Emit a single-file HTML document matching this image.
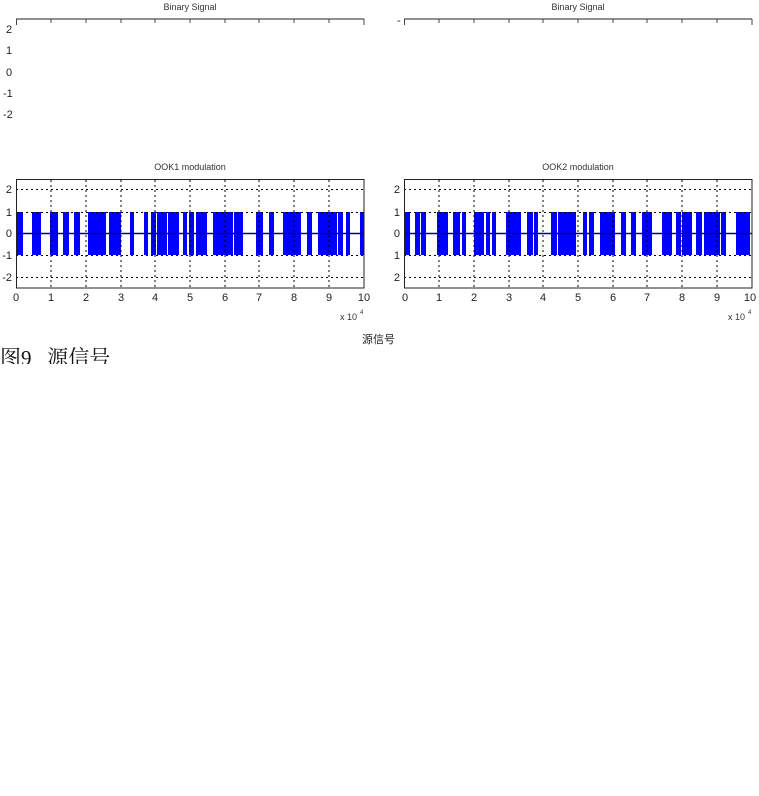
<!DOCTYPE html>
<html><head><meta charset="utf-8"><style>
html,body{margin:0;padding:0;background:#fff;width:759px;height:796px;overflow:hidden}
svg{position:absolute;left:0;top:0}
.t{font-family:"Liberation Sans",sans-serif;font-size:9px;fill:#333}
.n{font-family:"Liberation Sans",sans-serif;font-size:11px;fill:#222}
.cap{position:absolute;left:0;top:346px;height:18px;overflow:hidden;font-family:"Liberation Serif","Noto Serif CJK SC",serif;font-size:21px;line-height:24px;color:#111;white-space:pre}
</style></head><body>
<svg width="759" height="796" viewBox="0 0 759 796">
<!-- top left -->
<text class="t" x="190" y="10" text-anchor="middle">Binary Signal</text>
<line x1="16" y1="19" x2="364" y2="19" stroke="#222"/>
<g stroke="#444">
<line x1="16.5" y1="19" x2="16.5" y2="25"/><line x1="51" y1="19" x2="51" y2="23"/><line x1="86" y1="19" x2="86" y2="23"/><line x1="121" y1="19" x2="121" y2="23"/><line x1="155" y1="19" x2="155" y2="23"/><line x1="190" y1="19" x2="190" y2="23"/><line x1="225" y1="19" x2="225" y2="23"/><line x1="259" y1="19" x2="259" y2="23"/><line x1="294" y1="19" x2="294" y2="23"/><line x1="329" y1="19" x2="329" y2="23"/><line x1="364" y1="19" x2="364" y2="25"/>
</g>
<text class="n" x="6" y="33">2</text><text class="n" x="6" y="54">1</text><text class="n" x="6" y="76">0</text><text class="n" x="3" y="97">-1</text><text class="n" x="3" y="118">-2</text>
<!-- top right -->
<text class="t" x="578" y="10" text-anchor="middle">Binary Signal</text>
<line x1="404" y1="19" x2="752" y2="19" stroke="#222"/>
<g stroke="#444">
<line x1="404.5" y1="19" x2="404.5" y2="25"/><line x1="439" y1="19" x2="439" y2="23"/><line x1="474" y1="19" x2="474" y2="23"/><line x1="509" y1="19" x2="509" y2="23"/><line x1="543" y1="19" x2="543" y2="23"/><line x1="578" y1="19" x2="578" y2="23"/><line x1="613" y1="19" x2="613" y2="23"/><line x1="647" y1="19" x2="647" y2="23"/><line x1="682" y1="19" x2="682" y2="23"/><line x1="717" y1="19" x2="717" y2="23"/><line x1="752" y1="19" x2="752" y2="25"/>
</g>
<text class="n" x="397" y="24">-</text>

<!-- plot 1 -->
<text class="t" x="190" y="170" text-anchor="middle">OOK1 modulation</text>
<g fill="#0000ff">
<rect x="17" y="212" width="6" height="43"/><rect x="32" y="212" width="9" height="43"/><rect x="50" y="212" width="8" height="43"/><rect x="63" y="212" width="6" height="43"/><rect x="74" y="212" width="6" height="43"/><rect x="88" y="212" width="18" height="43"/><rect x="109" y="212" width="12" height="43"/><rect x="130" y="212" width="4" height="43"/><rect x="144" y="212" width="4" height="43"/><rect x="151" y="212" width="5" height="43"/><rect x="157" y="212" width="10" height="43"/><rect x="168" y="212" width="11" height="43"/><rect x="183" y="212" width="4" height="43"/><rect x="189" y="212" width="5" height="43"/><rect x="196" y="212" width="11" height="43"/><rect x="213" y="212" width="20" height="43"/><rect x="234" y="212" width="9" height="43"/><rect x="256" y="212" width="7" height="43"/><rect x="269" y="212" width="5" height="43"/><rect x="283" y="212" width="18" height="43"/><rect x="307" y="212" width="5" height="43"/><rect x="318" y="212" width="19" height="43"/><rect x="338" y="212" width="5" height="43"/><rect x="346" y="212" width="4" height="43"/><rect x="360" y="212" width="4" height="43"/>
</g>
<g stroke="#000" stroke-width="1" stroke-dasharray="2,3" fill="none">
<line x1="51" y1="180" x2="51" y2="288"/><line x1="86" y1="180" x2="86" y2="288"/><line x1="121" y1="180" x2="121" y2="288"/><line x1="155" y1="180" x2="155" y2="288"/><line x1="190" y1="180" x2="190" y2="288"/><line x1="225" y1="180" x2="225" y2="288"/><line x1="259" y1="180" x2="259" y2="288"/><line x1="294" y1="180" x2="294" y2="288"/><line x1="329" y1="180" x2="329" y2="288"/>
<line x1="16" y1="189.5" x2="364" y2="189.5"/><line x1="16" y1="277.5" x2="364" y2="277.5"/><line x1="16" y1="212.5" x2="364" y2="212.5"/><line x1="16" y1="255.5" x2="364" y2="255.5"/>
</g>
<line x1="16" y1="233.5" x2="364" y2="233.5" stroke="#00008b" stroke-width="1.5"/>
<rect x="16.5" y="179.5" width="347.5" height="108.5" fill="none" stroke="#222"/>
<g class="n" text-anchor="end"><text x="12" y="193">2</text><text x="12" y="216">1</text><text x="12" y="237">0</text><text x="12" y="259">-1</text><text x="12" y="281">-2</text></g>
<g class="n" text-anchor="middle"><text x="16" y="301">0</text><text x="51" y="301">1</text><text x="86" y="301">2</text><text x="121" y="301">3</text><text x="155" y="301">4</text><text x="190" y="301">5</text><text x="225" y="301">6</text><text x="259" y="301">7</text><text x="294" y="301">8</text><text x="329" y="301">9</text><text x="364" y="301">10</text></g>
<text class="t" x="340" y="320">x 10</text><text class="t" x="360" y="314" style="font-size:6px">4</text>

<!-- plot 2 -->
<text class="t" x="578" y="170" text-anchor="middle">OOK2 modulation</text>
<g fill="#0000ff">
<rect x="405" y="212" width="5" height="43"/><rect x="415" y="212" width="5" height="43"/><rect x="421" y="212" width="5" height="43"/><rect x="437" y="212" width="11" height="43"/><rect x="453" y="212" width="7" height="43"/><rect x="462" y="212" width="4" height="43"/><rect x="474" y="212" width="10" height="43"/><rect x="486" y="212" width="4" height="43"/><rect x="492" y="212" width="4" height="43"/><rect x="506" y="212" width="15" height="43"/><rect x="527" y="212" width="6" height="43"/><rect x="534" y="212" width="4" height="43"/><rect x="551" y="212" width="6" height="43"/><rect x="558" y="212" width="18" height="43"/><rect x="583" y="212" width="4" height="43"/><rect x="589" y="212" width="5" height="43"/><rect x="600" y="212" width="15" height="43"/><rect x="621" y="212" width="5" height="43"/><rect x="631" y="212" width="5" height="43"/><rect x="642" y="212" width="10" height="43"/><rect x="662" y="212" width="10" height="43"/><rect x="676" y="212" width="5" height="43"/><rect x="682" y="212" width="10" height="43"/><rect x="696" y="212" width="6" height="43"/><rect x="704" y="212" width="16" height="43"/><rect x="721" y="212" width="5" height="43"/><rect x="736" y="212" width="14" height="43"/>
</g>
<g stroke="#000" stroke-width="1" stroke-dasharray="2,3" fill="none">
<line x1="439" y1="180" x2="439" y2="288"/><line x1="474" y1="180" x2="474" y2="288"/><line x1="509" y1="180" x2="509" y2="288"/><line x1="543" y1="180" x2="543" y2="288"/><line x1="578" y1="180" x2="578" y2="288"/><line x1="613" y1="180" x2="613" y2="288"/><line x1="647" y1="180" x2="647" y2="288"/><line x1="682" y1="180" x2="682" y2="288"/><line x1="717" y1="180" x2="717" y2="288"/>
<line x1="404" y1="189.5" x2="752" y2="189.5"/><line x1="404" y1="277.5" x2="752" y2="277.5"/><line x1="404" y1="212.5" x2="752" y2="212.5"/><line x1="404" y1="255.5" x2="752" y2="255.5"/>
</g>
<line x1="404" y1="233.5" x2="752" y2="233.5" stroke="#00008b" stroke-width="1.5"/>
<rect x="404.5" y="179.5" width="347.5" height="108.5" fill="none" stroke="#222"/>
<g class="n" text-anchor="end"><text x="400" y="193">2</text><text x="400" y="216">1</text><text x="400" y="237">0</text><text x="400" y="259">1</text><text x="400" y="281">2</text></g>
<g class="n" text-anchor="middle"><text x="405" y="301">0</text><text x="439" y="301">1</text><text x="474" y="301">2</text><text x="509" y="301">3</text><text x="543" y="301">4</text><text x="578" y="301">5</text><text x="613" y="301">6</text><text x="647" y="301">7</text><text x="682" y="301">8</text><text x="717" y="301">9</text><text x="750" y="301">10</text></g>
<text class="t" x="728" y="320">x 10</text><text class="t" x="748" y="314" style="font-size:6px">4</text>

<text x="362" y="343" style="font-family:'Liberation Sans','Noto Sans CJK SC',sans-serif;font-size:11px;fill:#222">源信号</text>
</svg>
<div class="cap">图9   源信号</div>
</body></html>
